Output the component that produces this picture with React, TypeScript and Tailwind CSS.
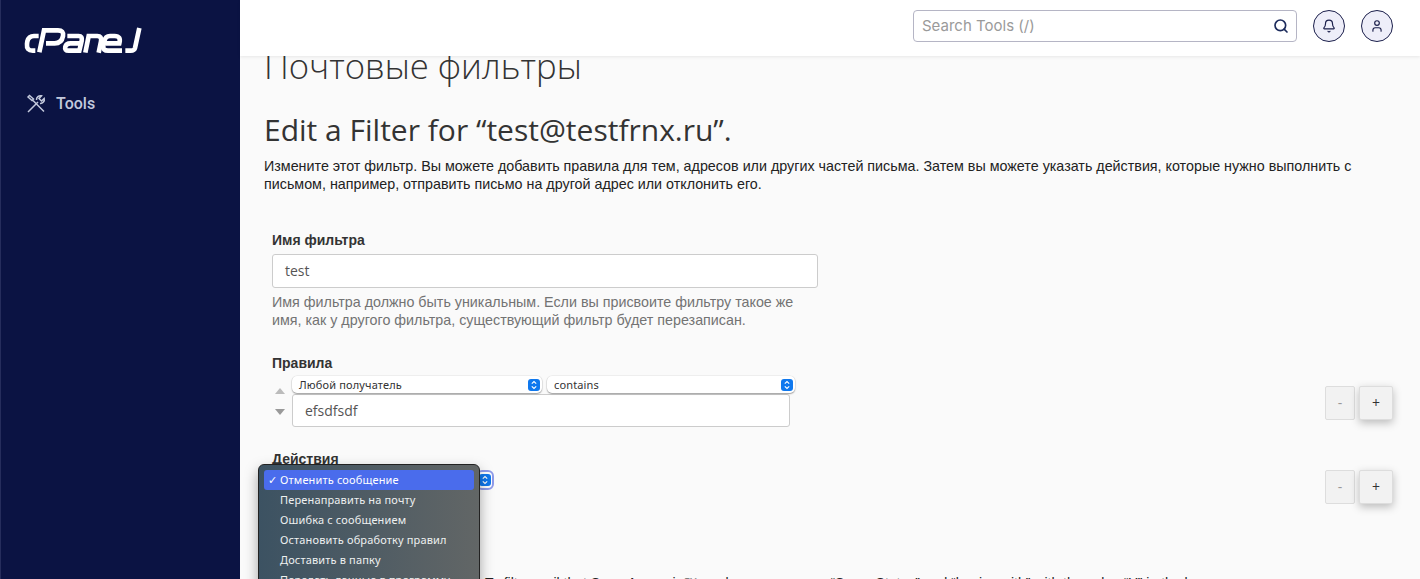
import { Search, Bell, User } from 'lucide-react';

const sans = "font-['Liberation_Sans',Arial,sans-serif]";

function Stepper() {
  return (
    <svg viewBox="0 0 12 12" className="w-3 h-3 shrink-0">
      <rect width="12" height="12" rx="3" fill="#0f78ee" />
      <path d="M3.8 4.6 6 2.6l2.2 2M3.8 7.4 6 9.4l2.2-2" fill="none" stroke="#fff" strokeWidth="1.2" />
    </svg>
  );
}

function MiniSelect({ label, className }: { label: string; className: string }) {
  return (
    <div className={`h-[17px] bg-white rounded-[5px] shadow-[0_1px_1.5px_rgba(0,0,0,0.35),0_0_0_0.5px_rgba(0,0,0,0.08)] flex items-center justify-between pl-[7px] pr-[2px] ${className}`}>
      <span className="text-[11px] leading-none text-[#333] tracking-[0.15px] font-['Noto_Sans',sans-serif]">{label}</span>
      <Stepper />
    </div>
  );
}

function PlusMinus() {
  return (
    <div className="flex items-start gap-1">
      <button className="w-[30px] h-[34px] bg-[#f2f2f2] border border-[#ddd] rounded-[2px] text-[#999] text-sm leading-none">-</button>
      <button className="w-[34px] h-[34px] bg-[#f2f2f2] border border-[#ddd] rounded-[2px] text-[#333] text-sm leading-none shadow-[0_3px_8px_rgba(0,0,0,0.25)]">+</button>
    </div>
  );
}

const menuItems = ['Перенаправить на почту', 'Ошибка с сообщением', 'Остановить обработку правил', 'Доставить в папку', 'Передать данные в программу'];

export default function App() {
  return (
    <div className="h-[579px] w-[1420px] overflow-hidden flex bg-[#fafafa] text-[#333] font-['Open_Sans',sans-serif]">
      {/* Sidebar */}
      <aside className="w-[240px] shrink-0 bg-[#0b1343] border-l border-[#262d5c]">
        <div className="pl-[19px] pt-[24px] h-[80px]">
          <svg viewBox="0 0 378 102" className="w-[126px] h-[34px]" fill="none" stroke="#fff" strokeWidth="14">
            <path d="M56 36H42Q26 36 22 52L21 60Q19 80 38 80H46" />
            <path d="M58 85 72 19H114Q132 19 129 36 125 58 104 58H78" />
            <path d="M142 36H176Q188 36 185 50L178 80H146Q133 80 136 68 139 58 151 58H181" />
            <path d="M196 86 206 36H232Q246 36 243 52L236 86" />
            <path d="M258 58H298Q304 36 284 36H270Q256 36 253 52L250 66Q248 80 264 80H306" />
            <path d="M358 12 345 72Q343 80 332 80H316" />
          </svg>
        </div>
        <div className="flex items-center gap-[10px] pl-[25px] pt-[12px] text-[#c3c9dc]">
          <svg viewBox="0 0 20 20" className="w-[20px] h-[20px]" fill="none" stroke="currentColor" strokeWidth="1.5">
            <path d="M2 18 12 8M10.5 6A4 4 0 0 1 15.5 1.8L13 4.5 15.5 7 18.2 4.5A4 4 0 0 1 14 9.5" />
            <path d="M2 3 3.5 1.5 7.5 5 6 6.5ZM6.5 6 18 17.5" />
          </svg>
          <span className="text-base font-medium font-['Roboto',sans-serif]">Tools</span>
        </div>
      </aside>

      <div className="flex-1 min-w-0 relative">
        {/* Top bar */}
        <header className="absolute top-0 inset-x-0 z-10 h-[56px] pb-1 bg-white shadow-[0_1px_3px_rgba(0,0,0,0.08)] flex items-center justify-end pr-[27px]">
          <div className="w-[384px] h-[32px] border border-[#b5b5c5] rounded-[4px] flex items-center justify-between pl-2 pr-[7px] mr-[16px]">
            <span className="text-[15px] text-[#9a9a9a] font-['Inter',sans-serif]">Search Tools (/)</span>
            <Search className="w-4 h-4 text-[#1c2b5c]" strokeWidth={2.5} />
          </div>
          <div className="w-[32px] h-[32px] rounded-full border border-[#1b1f4b] bg-[#eeeef9] flex items-center justify-center mr-[16px]">
            <Bell className="w-[14px] h-[14px] text-[#1b1f4b]" />
          </div>
          <div className="w-[32px] h-[32px] rounded-full border border-[#1b1f4b] bg-[#eeeef9] flex items-center justify-center">
            <User className="w-[14px] h-[14px] text-[#1b1f4b]" />
          </div>
        </header>

        {/* Content */}
        <main className="pl-[24px] pr-[50px] pt-[43px]">
          <h1 className="text-[34.7px] leading-[46px] font-light text-[#333]">Почтовые фильтры</h1>
          <h2 className="text-[30px] leading-[40px] mt-[21px] text-[#333]">Edit a Filter for “test@testfrnx.ru”.</h2>
          <p className={`${sans} text-[14.3px] leading-[18px] mt-[7px] text-[#222] w-[1110px]`}>
            Измените этот фильтр. Вы можете добавить правила для тем, адресов или других частей письма. Затем вы можете указать действия, которые нужно выполнить с письмом, например, отправить письмо на другой адрес или отклонить его.
          </p>

          <div className="pl-[8px] mt-[37px]">
            <label className={`${sans} block text-sm font-bold leading-[20px]`}>Имя фильтра</label>
            <div className="w-[546px] h-[34px] mt-[4px] bg-white border border-[#ccc] rounded-[3px] flex items-center px-[12px] text-sm text-[#555]">test</div>
            <p className={`${sans} w-[546px] text-[14.3px] leading-[18px] mt-[5px] text-[#737373]`}>
              Имя фильтра должно быть уникальным. Если вы присвоите фильтру такое же имя, как у другого фильтра, существующий фильтр будет перезаписан.
            </p>

            <label className={`${sans} block text-sm font-bold leading-[20px] mt-[24px]`}>Правила</label>
            <div className="flex items-start justify-between mt-[3px] relative">
              <div className="flex">
                <div className="w-[20px] flex flex-col items-start pt-[12px] gap-[15px]">
                  <span className="w-0 h-0 border-x-[5px] border-x-transparent border-b-[6px] border-b-[#bbb] ml-[3px]" />
                  <span className="w-0 h-0 border-x-[5px] border-x-transparent border-t-[6px] border-t-[#999] ml-[3px]" />
                </div>
                <div>
                  <div className="flex gap-[5px]">
                    <MiniSelect label="Любой получатель" className="w-[250px]" />
                    <MiniSelect label="contains" className="w-[248px]" />
                  </div>
                  <div className="w-[498px] h-[33px] mt-[1px] bg-white border border-[#ccc] rounded-[3px] flex items-center px-[12px] text-sm text-[#555]">efsdfsdf</div>
                </div>
              </div>
              <div className="mr-[-23px] mt-[10px]"><PlusMinus /></div>
            </div>

            <label className={`${sans} block text-sm font-bold leading-[20px] mt-[22px]`}>Действия</label>
            <div className="flex items-start justify-between">
              <div className="relative w-[222px] h-[60px]">
                <div className="absolute left-[204px] top-[1px] w-[18px] h-[20px] rounded-[6px] bg-white border-[2px] border-[#8f9bea] flex items-center justify-center">
                  <Stepper />
                </div>
              </div>
              <div className="mr-[-23px] mt-[1px]"><PlusMinus /></div>
            </div>

            <p className={`${sans} absolute left-[245px] top-[573px] text-sm leading-[20px] text-[#222] whitespace-nowrap`}>
              To filter mail that SpamAssassin™ marks as spam, use “Spam Status” and “begins with” with the value “Y” in the box.
            </p>
          </div>
        </main>

        {/* Native select popup */}
        <div className="absolute left-[18px] top-[464px] z-20 w-[222px] h-[140px] rounded-[6px] border border-[#222] bg-[linear-gradient(90deg,#3c5262,#626666)] shadow-[0_6px_14px_rgba(0,0,0,0.35)] p-[5px] text-[11px] tracking-[0.15px] font-['Noto_Sans',sans-serif] text-[#eef0f0]">
          <div className="h-[20px] rounded-[3px] bg-[#4a6cec] text-white flex items-center pl-[4px]">
            <span className="w-[12px]">✓</span>Отменить сообщение
          </div>
          {menuItems.map((item) => (
            <div key={item} className="h-[20px] flex items-center pl-[16px] whitespace-nowrap">{item}</div>
          ))}
        </div>
      </div>
    </div>
  );
}
